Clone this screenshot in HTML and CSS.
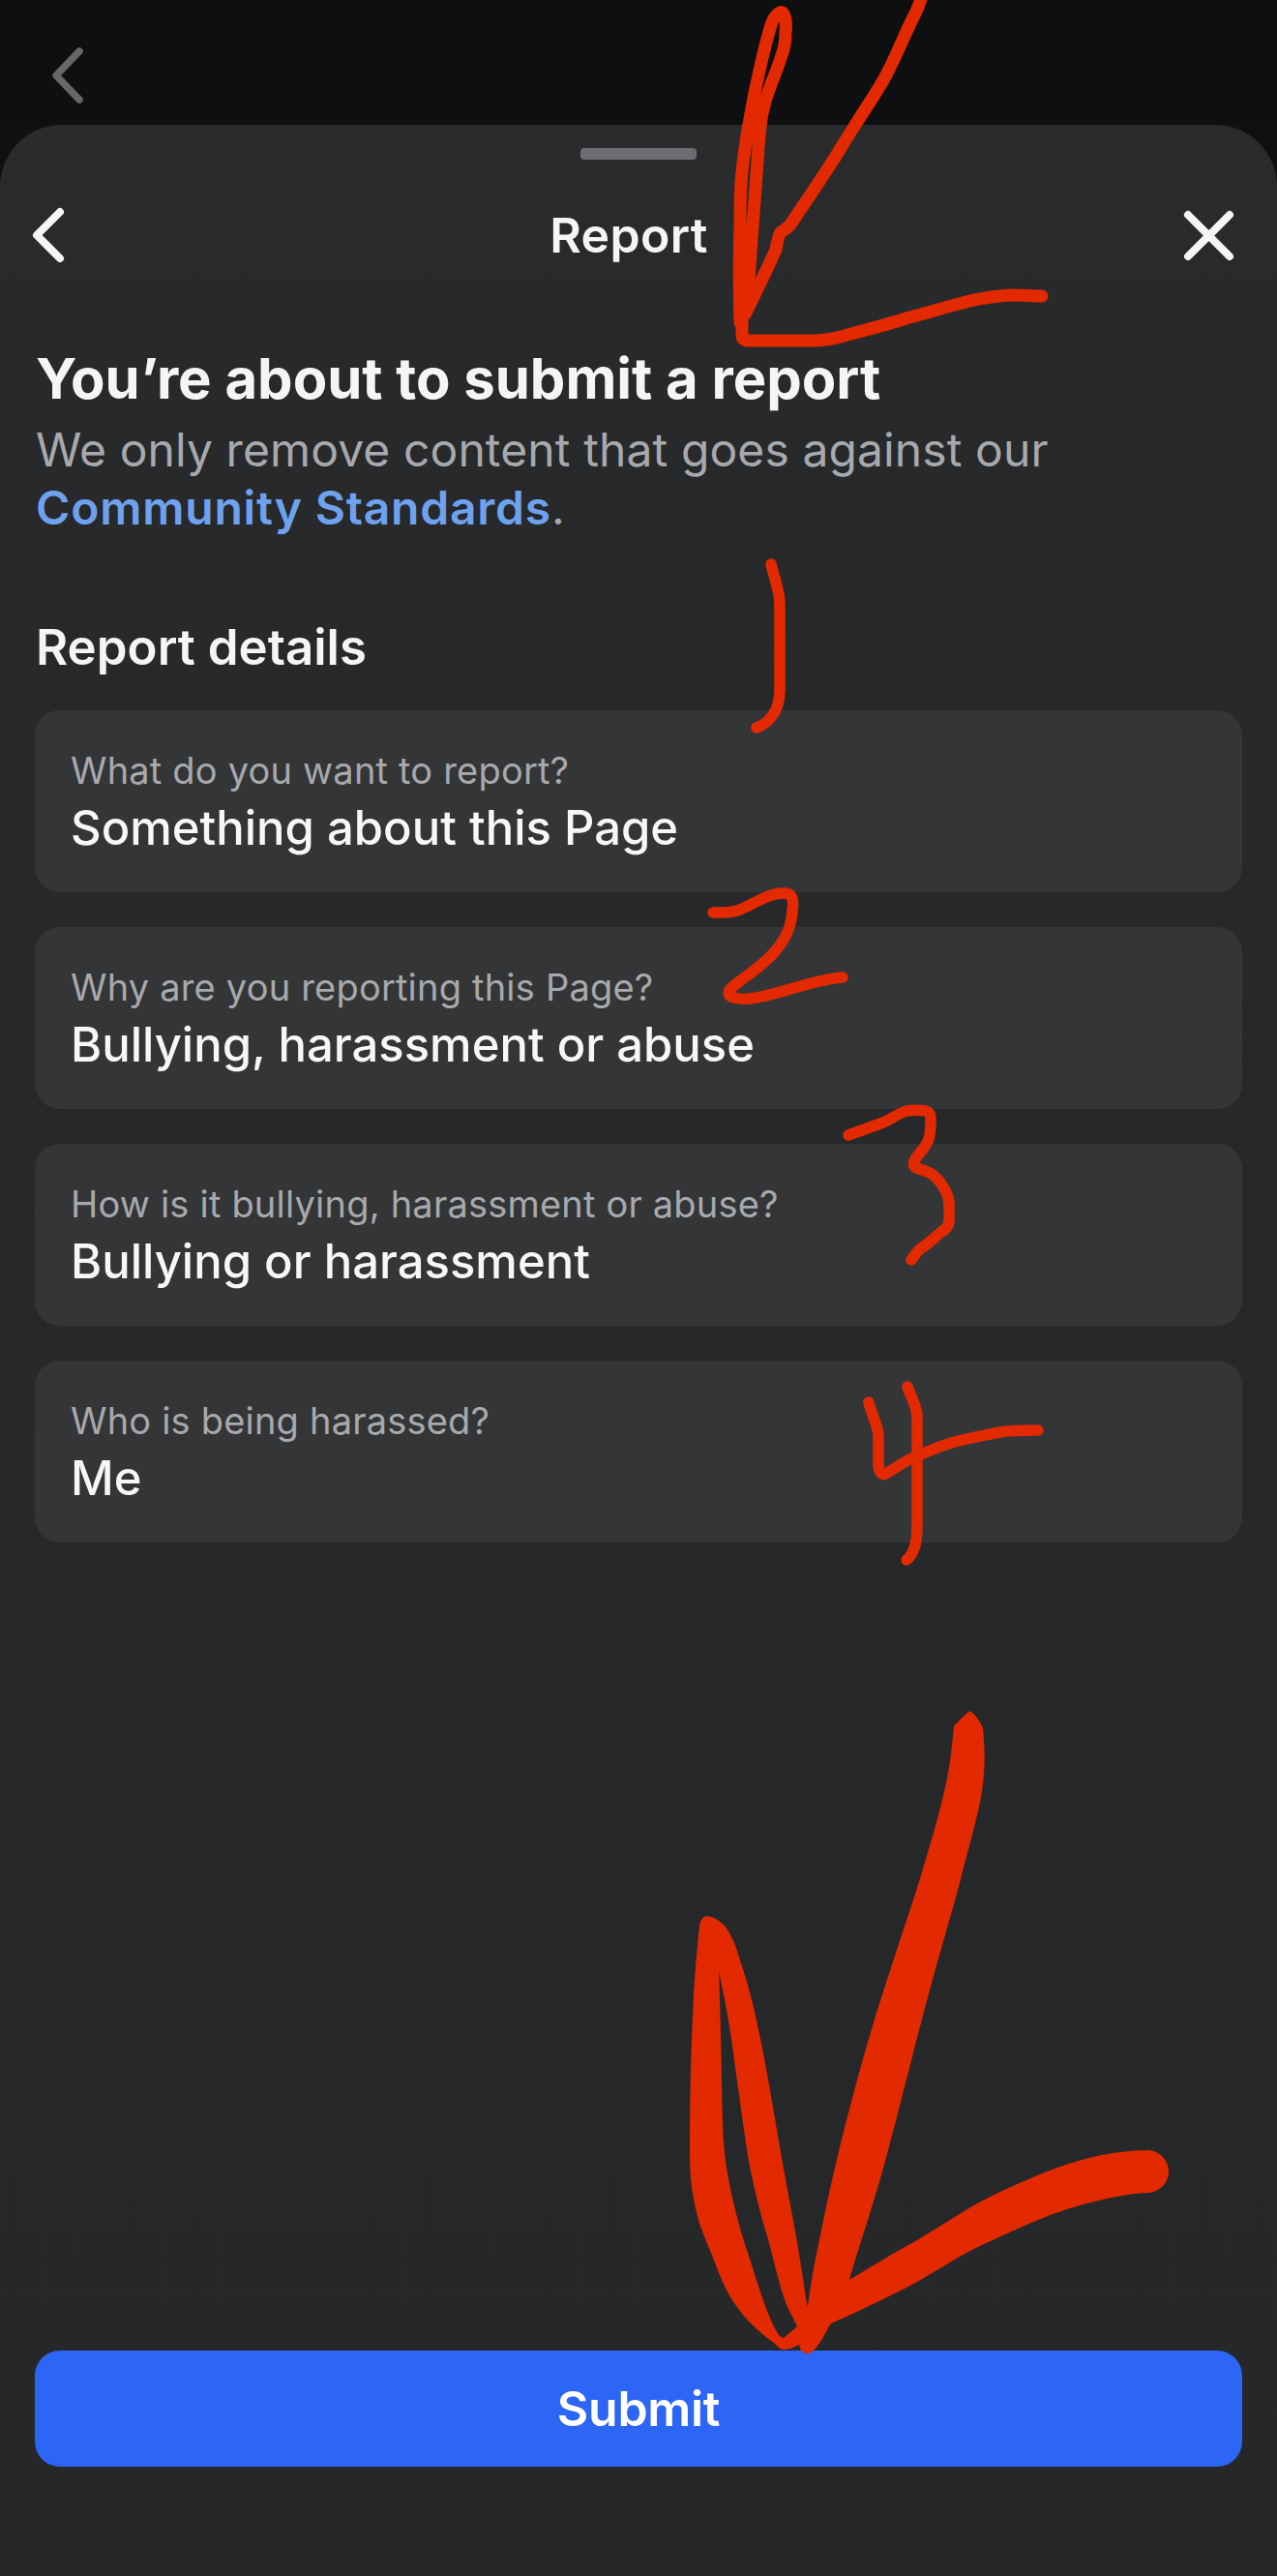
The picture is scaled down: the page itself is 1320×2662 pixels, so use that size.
FILE: index.html
```html
<!DOCTYPE html>
<html lang="en">
<head>
<meta charset="utf-8">
<title>Report</title>
<link rel="stylesheet" href="styles.css">
</head>
<body>
<div class="page">
  <div class="backdrop">
    <svg class="back-dim" viewBox="0 0 40 60" aria-hidden="true"><path d="M30 5 L6 30 L30 55"/></svg>
  </div>
  <main class="sheet">
    <div class="handle"></div>
    <header class="bar">
      <svg class="icon-back" viewBox="0 0 54 60" aria-hidden="true"><path d="M32 6 L8 30 L32 54"/></svg>
      <h1 class="bar-title">Report</h1>
      <svg class="icon-close" viewBox="0 0 64 60" aria-hidden="true"><path d="M12 9 L55 52 M55 9 L12 52"/></svg>
    </header>
    <section class="intro">
      <h2 class="headline">You’re about to submit a report</h2>
      <p class="lead">We only remove content that goes against our <a class="link">Community Standards</a>.</p>
    </section>
    <section class="details">
      <h3 class="details-title">Report details</h3>
      <div class="card"><span class="label">What do you want to report?</span><span class="value">Something about this Page</span></div>
      <div class="card"><span class="label">Why are you reporting this Page?</span><span class="value">Bullying, harassment or abuse</span></div>
      <div class="card"><span class="label">How is it bullying, harassment or abuse?</span><span class="value">Bullying or harassment</span></div>
      <div class="card"><span class="label">Who is being harassed?</span><span class="value">Me</span></div>
    </section>
    <button class="submit">Submit</button>
  </main>
  <svg class="ink" viewBox="0 0 1320 2662" aria-hidden="true">
    <g class="pen">
      <path d="M953 -4 C950 6 947 13 942 22 C934 38 924 64 913 83 C905 97 896 110 886 126 C878 138 871 150 863 163 C848 186 832 210 817 232 C812 238 809 238 807 240 C804 245 803 252 802 258 C792 280 781 303 770 325"/>
      <path d="M765 333 C764 300 764 265 765 233 C765 215 765 195 767 177 C769 158 772 140 775 123 C778 105 781 90 785 73 C789 55 793 38 798 23 C801 16 806 11 809 13 C812 16 813 25 812 33 C812 42 811 50 808 57 C805 67 801 77 797 87 C793 97 790 107 788 117 C785 133 784 150 783 167 C781 190 780 212 778 233 C776 262 774 290 772 320"/>
      <path d="M767 333 L767 346 C767 350 769 352 773 352 L840 352 C852 352 862 350 873 347 C895 341 918 335 940 328 C963 322 985 315 1007 310 C1022 307 1036 305 1050 305 C1060 305 1068 306 1077 306"/>
    </g>
    <g class="pen-thin">
      <path d="M797 583 C801 600 806 610 806 625 L806 713 C806 728 802 735 798 740 C793 747 788 750 782 752"/>
      <path d="M737 943 C750 943 760 943 767 939 C780 934 795 922 812 923 C822 924 820 935 818 950 C812 985 775 1005 757 1020 C748 1028 755 1033 775 1032 C800 1030 840 1012 871 1010"/>
      <path d="M877 1173 L913 1160 C921 1157 929 1150 937 1148 C944 1147 950 1147 957 1148 C962 1150 962 1153 962 1157 C962 1165 962 1171 960 1177 C957 1187 948 1193 945 1200 C944 1204 945 1206 947 1207 C953 1209 958 1210 963 1213 C972 1220 977 1228 980 1237 C982 1245 981 1255 981 1263 C980 1268 977 1271 973 1273 C966 1279 959 1286 952 1290 C948 1293 945 1298 942 1302"/>
      <path d="M898 1449 C901 1462 907 1472 908 1483 L908 1512 C908 1520 911 1525 915 1523 C925 1518 933 1511 943 1507 C958 1500 972 1494 987 1490 C1002 1486 1018 1483 1033 1480 C1046 1478 1060 1478 1073 1478"/>
      <path d="M938 1433 C941 1443 948 1452 948 1465 L948 1577 C948 1587 947 1594 945 1600 C943 1606 941 1609 937 1612"/>
    </g>
    <path class="fill" fill-rule="evenodd" d="M1003 1768 C1008 1772 1013 1778 1016 1786 C1018 1808 1018.8 1825 1015 1851 C1011 1877 1002 1906 993 1942 C983.7 1977.5 972.2 2015 959 2064 C945.8 2113 927.5 2188 914 2237 C900.5 2285.7 885 2330 878 2356 C900 2343 925 2327 948 2315 C975 2299 1005 2278 1034 2265 C1070 2248 1105 2234 1138 2227 C1155 2224 1170 2222 1186 2222 C1198 2222 1208 2232 1208 2244 C1208 2256 1198 2266 1186 2266 C1163 2267 1143 2272 1120 2278 C1085 2287 1050 2304 1017 2319 C988 2332 960 2353 931 2367 C905 2380 880 2392 859 2401 C852 2412 848 2422 842 2428 C838 2432 835 2433 833 2432 C829 2431 827 2428 826 2423 C820 2426 815 2428 810 2428 C806 2428 803 2424 800 2421 C783 2409 770 2396 759 2380 C748 2364 742 2346 735 2328 C725 2305 720 2290 717 2272 C713 2252 713 2235 713 2215 C713 2170 714 2125 716 2085 C717 2050 720 2020 723 1990 C724 1984 727 1980 731 1980 C738 1981 744 1985 749 1990 C757 2000 762 2015 766 2029 C775 2055 781 2082 786 2107 C795 2150 802 2197 810 2241 C818 2285 828 2335 833 2376 L835 2384 C838 2362 839.3 2352 845 2324 C850.7 2296 859.3 2254 869 2215 C878.7 2176 889.2 2136 903 2090 C916.8 2044 939.7 1978.5 952 1938 C964.3 1897.5 971.3 1872.7 977 1847 C982.7 1821.3 984 1805 986 1784 C991 1778 997 1772 1003 1768 Z M743 2037 C745 2090 746 2150 747 2194 C748 2215 749 2230 752 2246 C757 2275 765 2305 773 2328 C780 2350 792 2390 802 2408 C805 2414 808 2416 810 2416 L824 2404 L814 2384 C806 2365 800 2335 793 2311 C785 2285 778 2255 773 2228 C768 2195 764 2165 759 2129 C755 2095 748 2060 743 2037 Z"/>
  </svg>
</div>
</body>
</html>
```

FILE: styles.css
```css
* { box-sizing: border-box; margin: 0; padding: 0; }
html, body { background: #0f1012; }
body { font-family: Inter, "Noto Sans", "Liberation Sans", sans-serif; color: #f4f5f7; }

.page { position: relative; display: flex; flex-direction: column; width: 1320px; height: 2662px; overflow: hidden; background: #0f1012; }

.backdrop { flex: none; height: 129px; padding: 48px 0 0 52px; background: #0e0f11; }
.back-dim { display: block; width: 40px; height: 60px; fill: none; stroke: #666769; stroke-width: 7.5; stroke-linecap: round; stroke-linejoin: round; }

.sheet { flex: 1; display: flex; flex-direction: column; padding: 24px 36px 113px; background: linear-gradient(#2a2b2d, #28292b 220px, #262729); border-radius: 64px 64px 0 0; }
.handle { flex: none; width: 120px; height: 12px; margin: 0 auto; border-radius: 4px; background: #6c6d70; }

.bar { flex: none; display: flex; align-items: center; height: 106px; margin: 25px 4px 0 -6px; }
.icon-back { flex: none; width: 54px; height: 60px; fill: none; stroke: #f4f5f7; stroke-width: 8; stroke-linecap: round; stroke-linejoin: round; }
.icon-close { flex: none; width: 64px; height: 60px; fill: none; stroke: #f4f5f7; stroke-width: 8; stroke-linecap: round; }
.bar-title { flex: 1; text-align: center; font-size: 50px; font-weight: 600; line-height: 60px; letter-spacing: 0.3px; }

.intro { flex: none; padding: 60px 0 0 1px; }
.headline { font-size: 58px; font-weight: 700; line-height: 70px; }
.lead { margin-top: 9px; width: 1120px; font-size: 48px; line-height: 60px; letter-spacing: 0.1px; color: #a7a9ad; }
.link { font-weight: 600; letter-spacing: 0.8px; color: #6ea2ee; }

.details { flex: none; display: flex; flex-direction: column; gap: 36px; margin-top: 84px; }
.details-title { margin: 0 0 -1px 1px; font-size: 51px; font-weight: 600; line-height: 60px; }
.card { display: flex; flex-direction: column; height: 188px; padding: 39px 37px 0; border-radius: 26px; background: #343537; }
.label { font-size: 38px; line-height: 46px; letter-spacing: 0.2px; color: #a7a9ad; }
.value { margin-top: 7px; font-size: 49px; font-weight: 500; line-height: 60px; color: #f6f7f9; }

.submit { flex: none; height: 120px; margin-top: auto; border: 0; border-radius: 26px; background: #2d65f5; color: #fff; font: 600 50px/60px Inter, "Noto Sans", sans-serif; letter-spacing: -0.3px; }

.ink { position: absolute; left: 0; top: 0; width: 1320px; height: 2662px; pointer-events: none; }
.pen, .pen-thin { fill: none; stroke: #e32900; stroke-linecap: round; stroke-linejoin: round; }
.pen { stroke-width: 13; }
.pen-thin { stroke-width: 11.5; }
.fill { fill: #e32900; }
```
